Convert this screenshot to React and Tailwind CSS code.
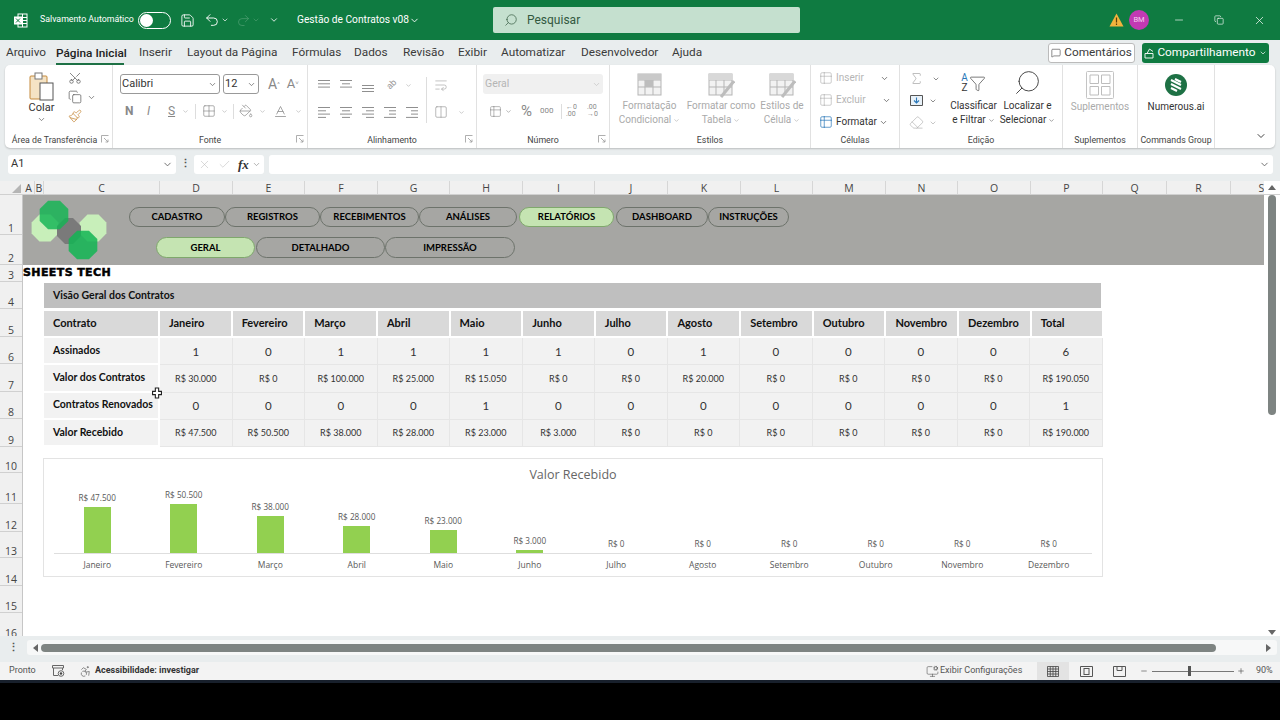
import React from 'react';
import {
  ChevronDown, Search, Save, Undo2, Redo2, Minus, Copy, X, Check, MessageSquare,
  Scissors, Paintbrush, Grid2x2, PaintBucket, Baseline, Table2, Sigma, Eraser,
  Filter, WrapText, Columns2, Accessibility, MonitorCog, Plus,
} from 'lucide-react';

const sheetFont = "font-['Lato',sans-serif]";

const Chev = ({ className = 'text-[#666]', size = 9 }) => <ChevronDown size={size} strokeWidth={2} className={`shrink-0 ${className}`} />;

const Lines = ({ widths, gray = '#8f8f8f' }) => (
  <svg width="14" height="13" viewBox="0 0 14 13" className="shrink-0">
    {widths.map((w, i) => (
      <line key={i} x1={w[0]} x2={w[1]} y1={1.5 + i * 3.3} y2={1.5 + i * 3.3} stroke={gray} strokeWidth="1" />
    ))}
  </svg>
);

const Launcher = ({ color = '#9a9a9a' }) => (
  <svg width="8" height="8" viewBox="0 0 8 8" className="shrink-0">
    <path d="M0.5 7.5V0.5H7.5M3 3L7 7M7 4.5V7H4.5" fill="none" stroke={color} strokeWidth="0.8" />
  </svg>
);

const Group = ({ width, label, launcher, children, border = true }) => (
  <div className={`flex flex-col shrink-0 h-full ${border ? 'border-r border-[#e1e1e1]' : ''}`} style={{ width }}>
    <div className="h-[66px] flex">{children}</div>
    <div className="flex-1 flex items-center justify-center relative text-[8.8px] leading-[12px] text-[#444] pt-[1px] whitespace-nowrap">
      <span className={launcher && width < 110 ? 'pr-[9px]' : ''}>{label}</span>
      {launcher && <span className="absolute right-[3px] top-[4px]"><Launcher /></span>}
    </div>
  </div>
);

const StyleIcon = ({ kind }) => (
  <svg width="28" height="26" viewBox="0 0 28 26">
    <rect x="2" y="2" width="23" height="21" fill="#f2f2f2" stroke="#b5b5b5" />
    <path d="M2 8H25M2 15H25M9 2V23M17 2V23" stroke="#b5b5b5" />
    <rect x="2" y="2" width="23" height="6" fill={kind === 0 ? '#c9c9c9' : '#d8d8d8'} />
    {kind > 0 && <path d="M14 25L27 9" stroke="#bdbdbd" strokeWidth="3" />}
    {kind === 0 && <rect x="9" y="8" width="8" height="7" fill="#bdbdbd" />}
  </svg>
);

const Ribbon = () => (
  <div className="mx-[5px] h-[83px] bg-white rounded-[5px] shadow-[0_1px_2px_rgba(0,0,0,0.2)] flex pl-[1px] text-[#333]">
    <Group width={107} label="Área de Transferência" launcher>
      <div className="w-[57px] flex flex-col items-center pt-[7px] pl-[14px]">
        <svg width="26" height="29" viewBox="0 0 26 29">
          <rect x="1" y="4" width="17" height="23" rx="1" fill="#f5e3c4" stroke="#c58a3c" />
          <rect x="6" y="1" width="7" height="6" fill="#fff" stroke="#777" />
          <rect x="11" y="11" width="13" height="17" fill="#fff" stroke="#555" />
        </svg>
        <span className="text-[11px] leading-[14px]">Colar</span>
        <Chev />
      </div>
      <div className="flex flex-col pt-[6px] pl-[5px] gap-[5px]">
        <Scissors size={14} strokeWidth={1.2} className="text-[#555] -rotate-90" />
        <div className="flex items-center gap-[5px]">
          <Copy size={14} strokeWidth={1.2} className="text-[#555]" />
          <Chev />
        </div>
        <Paintbrush size={14} strokeWidth={1.3} className="text-[#c58a3c]" />
      </div>
    </Group>
    <Group width={195} label="Fonte" launcher>
      <div className="flex flex-col pl-[7px] pt-[9px]">
        <div className="flex items-center h-[20px] gap-[3px]">
          <div className="w-[100px] h-[20px] border border-[#999] rounded-[3px] flex items-center justify-between px-[1px] pr-[2px] text-[11px]">
            <span>Calibri</span><Chev />
          </div>
          <div className="w-[36px] h-[20px] border border-[#999] rounded-[3px] flex items-center justify-between px-[1px] pr-[2px] text-[11px]">
            <span>12</span><Chev />
          </div>
          <span className="ml-[6px] text-[14px] text-[#888]">A<sup className="text-[6px]">^</sup></span>
          <span className="ml-[4px] text-[13px] text-[#888]">A<sup className="text-[6px]">˅</sup></span>
        </div>
        <div className="flex items-center h-[20px] mt-[7px] pl-[5px] text-[#888]">
          <span className="w-[22px] text-[12px] font-bold">N</span>
          <span className="w-[21px] text-[12px] italic">I</span>
          <span className="w-[14px] text-[12px] underline">S</span>
          <Chev className="text-[#aaa]" size={7} />
          <span className="w-[1px] h-[15px] bg-[#ddd] mx-[6px]" />
          <Grid2x2 size={14} strokeWidth={1} className="text-[#777]" />
          <Chev className="text-[#aaa] ml-[5px]" size={7} />
          <span className="w-[1px] h-[15px] bg-[#ddd] mx-[5px]" />
          <PaintBucket size={14} strokeWidth={1.2} className="text-[#888]" />
          <Chev className="text-[#aaa] ml-[6px]" size={7} />
          <Baseline size={15} strokeWidth={1.2} className="text-[#888] ml-[7px]" />
          <Chev className="text-[#aaa] ml-[7px]" size={7} />
        </div>
      </div>
    </Group>
    <Group width={169} label="Alinhamento" launcher>
      <div className="flex pl-[9px] pt-[12px]">
        <div className="flex flex-col w-[109px]">
          <div className="flex items-center gap-[8px] h-[16px]">
            <Lines widths={[[1, 13], [1, 13], [1, 13]]} />
            <Lines widths={[[1, 13], [3, 11], [1, 13]]} />
            <svg width="14" height="13" viewBox="0 0 14 13" className="shrink-0">
              <path d="M1 6.5H13M1 9.5H13M1 12.5H13" stroke="#8f8f8f" />
            </svg>
            <span className="text-[9px] text-[#999] -rotate-45 ml-[4px]">ab</span>
            <Chev className="text-[#aaa]" size={7} />
          </div>
          <div className="flex items-center gap-[8px] h-[16px] mt-[11px]">
            <Lines widths={[[1, 13], [1, 9], [1, 13], [1, 9]]} />
            <Lines widths={[[1, 13], [3, 11], [1, 13], [3, 11]]} />
            <Lines widths={[[1, 13], [5, 13], [1, 13], [5, 13]]} />
            <Lines widths={[[1, 13], [6, 13], [6, 13], [1, 13]]} />
            <Lines widths={[[1, 13], [6, 13], [6, 13], [1, 13]]} />
          </div>
        </div>
        <span className="w-[1px] h-[46px] bg-[#ddd]" />
        <div className="flex flex-col pl-[7px]">
          <WrapText size={14} strokeWidth={1} className="text-[#999] h-[16px]" />
          <div className="flex items-center h-[16px] mt-[11px] gap-[10px]">
            <Columns2 size={14} strokeWidth={1} className="text-[#888]" />
            <Chev className="text-[#aaa]" size={7} />
          </div>
        </div>
      </div>
    </Group>
    <Group width={133} label="Número" launcher>
      <div className="flex flex-col pl-[6px] pt-[9px]">
        <div className="w-[120px] h-[20px] bg-[#f0f0f0] rounded-[3px] flex items-center justify-between px-[2px] text-[10.5px] text-[#b5b5b5]">
          <span>Geral</span><Chev className="text-[#c5c5c5]" />
        </div>
        <div className="flex items-center h-[20px] mt-[7px] pl-[6px] text-[#888]">
          <Table2 size={13} strokeWidth={1.1} />
          <Chev className="ml-[3px]" size={7} />
          <span className="ml-[9px] text-[15px] w-[14px] leading-[15px]">%</span>
          <span className="text-[8px] ml-[5px] w-[18px]">000</span>
          <span className="w-[1px] h-[15px] bg-[#ddd] mx-[3px]" />
          <span className="text-[7px] leading-[7px] ml-[1px] w-[21px]">←0<br />.00</span>
          <span className="text-[7px] leading-[7px]">.00<br />→0</span>
        </div>
      </div>
    </Group>
    <Group width={201} label="Estilos">
      <div className="flex w-full text-[#aaa] text-[10px] leading-[14px] text-center pt-[7px] pl-[2px]">
        {[['Formatação', 'Condicional', 0, 75], ['Formatar como', 'Tabela', 1, 68], ['Estilos de', 'Célula', 2, 54]].map(([a, b, k, w]) => (
          <div key={a} className="flex flex-col items-center shrink-0" style={{ width: w }}>
            <StyleIcon kind={k} />
            <span className="whitespace-nowrap mt-[1px]">{a}</span>
            <span className="flex items-center gap-[2px]">{b}<Chev className="text-[#aaa]" size={7} /></span>
          </div>
        ))}
      </div>
    </Group>
    <Group width={89} label="Células">
      <div className="flex flex-col pl-[8px] pt-[6px] gap-[8px] text-[10px] leading-[14px]">
        <div className="flex items-center text-[#b5b5b5]">
          <Table2 size={14} strokeWidth={1} className="text-[#aaa]" />
          <span className="ml-[3px] w-[44px]">Inserir</span><Chev className="text-[#555]" />
        </div>
        <div className="flex items-center text-[#b5b5b5]">
          <Table2 size={14} strokeWidth={1} className="text-[#aaa]" />
          <span className="ml-[3px] w-[46px]">Excluir</span><Chev className="text-[#555]" />
        </div>
        <div className="flex items-center text-[#333]">
          <Table2 size={14} strokeWidth={1.2} className="text-[#2a77b8]" />
          <span className="ml-[3px]">Formatar</span><Chev className="text-[#555] ml-[2px]" />
        </div>
      </div>
    </Group>
    <Group width={163} label="Edição">
      <div className="flex flex-col pl-[9px] pt-[6px] gap-[7px] w-[46px]">
        <div className="flex items-center gap-[8px]"><Sigma size={15} strokeWidth={1} className="text-[#999]" /><Chev className="text-[#555]" size={8} /></div>
        <div className="flex items-center gap-[5px]">
          <svg width="15" height="15" viewBox="0 0 15 15" className="shrink-0">
            <path d="M1.5 2.5H13.5V12.5H1.5Z" fill="#e8f1f8" stroke="#555" />
            <path d="M7.5 4.5V10M5 7.5L7.5 10L10 7.5" fill="none" stroke="#2a77b8" strokeWidth="1.1" />
          </svg>
          <Chev className="text-[#555]" size={8} />
        </div>
        <div className="flex items-center gap-[5px]"><Eraser size={15} strokeWidth={1} className="text-[#aaa]" /><Chev className="text-[#aaa]" size={8} /></div>
      </div>
      <div className="w-[55px] flex flex-col items-center pt-[5px] text-[10px] leading-[14px] text-[#333]">
        <div className="flex items-center h-[26px] gap-[1px]">
          <span className="text-[10px] leading-[10px] text-center"><span className="text-[#2a77b8]">A</span><br />Z</span>
          <Filter size={17} strokeWidth={1} className="text-[#444]" />
        </div>
        <span className="mt-[3px] whitespace-nowrap">Classificar</span>
        <span className="flex items-center gap-[2px] whitespace-nowrap">e Filtrar<Chev size={7} /></span>
      </div>
      <div className="w-[53px] flex flex-col items-center pt-[3px] text-[10px] leading-[14px] text-[#333]">
        <Search size={29} strokeWidth={0.8} className="text-[#444] -scale-x-100" />
        <span className="mt-[2px] whitespace-nowrap">Localizar e</span>
        <span className="flex items-center gap-[2px] whitespace-nowrap">Selecionar<Chev size={7} /></span>
      </div>
    </Group>
    <Group width={75} label="Suplementos">
      <div className="w-full flex flex-col items-center pt-[6px] text-[10px] text-[#aaa]">
        <svg width="28" height="28" viewBox="0 0 28 28">
          <rect x="0.5" y="0.5" width="27" height="27" rx="1" fill="none" stroke="#c4c4c4" />
          <path d="M4 4H12.5V12.5H4ZM15.5 4H24V12.5H15.5ZM4 15.5H12.5V24H4ZM15.5 15.5H24V24H15.5Z" fill="none" stroke="#bdbdbd" />
        </svg>
        <span className="mt-[1px] leading-[14px]">Suplementos</span>
      </div>
    </Group>
    <Group width={77} label="Commands Group">
      <div className="w-full flex flex-col items-center pt-[8px] text-[10px] text-[#333]">
        <svg width="24" height="24" viewBox="0 0 24 24">
          <circle cx="12" cy="12" r="11" fill="#1e7145" />
          <path d="M7 7L17 12M7 11L17 16M7 15L13 18M11 6L17 9" stroke="#fff" strokeWidth="2" />
        </svg>
        <span className="mt-[3px] leading-[14px] whitespace-nowrap">Numerous.ai</span>
      </div>
    </Group>
    <div className="flex-1 flex items-end justify-end pr-[8px] pb-[6px]"><Chev className="text-[#444]" size={12} /></div>
  </div>
);

const cols = [['A', 12], ['B', 9], ['C', 116], ['D', 73], ['E', 72], ['F', 73], ['G', 72], ['H', 73], ['I', 72], ['J', 73], ['K', 73], ['L', 72], ['M', 73], ['N', 72], ['O', 73], ['P', 72], ['Q', 64], ['R', 64], ['S', 62]];
const rows = [[1, 40], [2, 30], [3, 17], [4, 27], [5, 28], [6, 27], [7, 28], [8, 27], [9, 28], [10, 26], [11, 31], [12, 28], [13, 26], [14, 28], [15, 27], [16, 27]];

const months = ['Janeiro', 'Fevereiro', 'Março', 'Abril', 'Maio', 'Junho', 'Julho', 'Agosto', 'Setembro', 'Outubro', 'Novembro', 'Dezembro'];
const table = [
  { name: 'Assinados', big: true, vals: [1, 0, 1, 1, 1, 1, 0, 1, 0, 0, 0, 0, 6] },
  { name: 'Valor dos Contratos', vals: ['R$ 30.000', 'R$ 0', 'R$ 100.000', 'R$ 25.000', 'R$ 15.050', 'R$ 0', 'R$ 0', 'R$ 20.000', 'R$ 0', 'R$ 0', 'R$ 0', 'R$ 0', 'R$ 190.050'] },
  { name: 'Contratos Renovados', big: true, vals: [0, 0, 0, 0, 1, 0, 0, 0, 0, 0, 0, 0, 1] },
  { name: 'Valor Recebido', vals: ['R$ 47.500', 'R$ 50.500', 'R$ 38.000', 'R$ 28.000', 'R$ 23.000', 'R$ 3.000', 'R$ 0', 'R$ 0', 'R$ 0', 'R$ 0', 'R$ 0', 'R$ 0', 'R$ 190.000'] },
];
const chart = [[47500, 46], [50500, 49], [38000, 37], [28000, 27], [23000, 23], [3000, 3], [0, 0], [0, 0], [0, 0], [0, 0], [0, 0], [0, 0]];

const octagon = (cx, cy, r) =>
  Array.from({ length: 8 }, (_, i) => {
    const a = Math.PI / 8 + (i * Math.PI) / 4;
    return `${cx + r * Math.cos(a)},${cy + r * Math.sin(a)}`;
  }).join(' ');

const Logo = () => (
  <svg width="86" height="66" viewBox="0 0 86 66" className="shrink-0 mt-[3px] ml-[8px]">
    <polygon points={octagon(14, 30, 14.5)} fill="#c8efba" />
    <polygon points={octagon(62, 30, 14.5)} fill="#c8efba" />
    <polygon points="34,20 42,20 50,28 50,38 42,46 34,46 26,38 26,28" fill="#7a7a7a" />
    <polygon points={octagon(23, 17, 15.5)} fill="#12b553" fillOpacity="0.82" />
    <polygon points={octagon(52, 47, 15.5)} fill="#12b553" fillOpacity="0.85" />
  </svg>
);

const Pill = ({ label, width, active }) => (
  <div
    className={`flex items-center justify-center rounded-full border shrink-0 pt-[1px] text-[9.5px] font-bold text-black ${sheetFont} ${active ? 'bg-[#c5e4b2] border-[#7fa86c]' : 'border-[#6d736b]'}`}
    style={{ width }}
  >
    {label}
  </div>
);

const Nav = () => (
  <div className="h-[70px] bg-[#a6a6a3] flex">
    <Logo />
    <div className="flex flex-col pl-[12px] pt-[12px]">
      <div className="flex h-[20px]">
        <Pill label="CADASTRO" width={96} />
        <Pill label="REGISTROS" width={95} />
        <Pill label="RECEBIMENTOS" width={99} />
        <Pill label="ANÁLISES" width={98} />
        <span className="w-[2px]" />
        <Pill label="RELATÓRIOS" width={95} active />
        <span className="w-[2px]" />
        <Pill label="DASHBOARD" width={92} />
        <Pill label="INSTRUÇÕES" width={81} />
      </div>
      <div className="flex h-[21px] mt-[10px] ml-[27px]">
        <Pill label="GERAL" width={99} active />
        <span className="w-[1px]" />
        <Pill label="DETALHADO" width={129} />
        <Pill label="IMPRESSÃO" width={130} />
      </div>
    </div>
  </div>
);

const ContractTable = () => (
  <div className={`ml-[21px] w-[1059px] ${sheetFont}`}>
    <div className="h-[25px] w-[1057px] bg-[#bfbfbf] flex items-center pl-[9px] pt-[1px] text-[10.5px] font-bold text-[#111]">Visão Geral dos Contratos</div>
    <div className="grid grid-cols-[116px_repeat(13,72.65px)] mt-[3px]">
      <div className="h-[25px] mr-[2px] bg-[#d9d9d9] flex items-center pl-[9px] text-[11px] font-bold text-[#111]">Contrato</div>
      {[...months, 'Total'].map((m) => (
        <div key={m} className="h-[25px] mr-[2px] bg-[#d9d9d9] flex items-center pl-[9px] text-[11px] font-bold text-[#111]">{m}</div>
      ))}
    </div>
    <div className="mt-[2px] grid grid-cols-[116px_repeat(13,72.5px)] auto-rows-[27.3px]">
      {table.map((row) => (
        <React.Fragment key={row.name}>
          <div className="mr-[2px] border-b-2 border-white bg-[#f2f2f2] flex items-center pl-[9px] text-[10.5px] font-bold text-[#111] whitespace-nowrap">{row.name}</div>
          {row.vals.map((v, i) => (
            <div key={i} className={`bg-[#f2f2f2] border-r border-b border-[#e6e6e6] flex items-center justify-center text-[#333] ${row.big ? 'text-[11.5px]' : 'text-[9px]'}`}>{v}</div>
          ))}
        </React.Fragment>
      ))}
    </div>
  </div>
);

const Chart = () => (
  <div className="ml-[20px] mt-[11px] w-[1060px] h-[119px] border border-[#e3e3e3] bg-white flex flex-col px-[10px] text-[#595959] font-['Open_Sans',sans-serif]">
    <div className="h-[30px] pt-[6px] text-center text-[12.5px] leading-[20px] text-[#666]">Valor Recebido</div>
    <div className="h-[65px] flex border-b border-[#dedede]">
      {chart.map(([v, h], i) => (
        <div key={months[i]} className="flex-1 flex flex-col items-center justify-end">
          <span className="text-[8.2px] leading-[12px] mb-[3px]">{`R$ ${v ? v.toLocaleString('pt-BR') : 0}`}</span>
          <div className="w-[27px] bg-[#92d050]" style={{ height: h }} />
        </div>
      ))}
    </div>
    <div className="flex pt-[5px]">
      {months.map((m) => (
        <span key={m} className="flex-1 text-center text-[8.5px] leading-[12px]">{m}</span>
      ))}
    </div>
  </div>
);

const Sheet = () => (
  <div className="h-[455px] flex flex-col font-['Open_Sans',sans-serif]">
    <div className="h-[14px] flex bg-[#f0f0f0] border-b border-[#d0d0d0] text-[10.5px] text-[#444] shrink-0">
      <div className="w-[23px] flex items-end justify-end pr-[2px] pb-[1px] shrink-0">
        <span className="w-0 h-0 border-l-[9px] border-l-transparent border-b-[9px] border-b-[#b5b5b5]" />
      </div>
      <div className="w-[1241px] flex overflow-hidden shrink-0">
        {cols.map(([c, w]) => (
          <span key={c} className="shrink-0 text-center leading-[14px] border-r border-[#d6d6d6]" style={{ width: w }}>{c}</span>
        ))}
      </div>
      <div className="flex-1 flex items-center justify-center bg-white">
        <span className="w-0 h-0 border-x-[4px] border-x-transparent border-b-[5px] border-b-[#666]" />
      </div>
    </div>
    <div className="flex flex-1 min-h-0">
      <div className="w-[23px] shrink-0 overflow-hidden bg-[#f0f0f0] border-r border-[#c6c6c6] text-[10.5px] text-[#444]">
        {rows.map(([n, h]) => (
          <div key={n} className="flex items-end justify-center border-b border-[#d0d0d0] leading-[12px]" style={{ height: h }}>{n}</div>
        ))}
      </div>
      <div className="w-[1241px] shrink-0 overflow-hidden bg-white">
        <Nav />
        <div className="h-[18px] text-[11px] leading-[15px] font-black tracking-[0.4px] text-black [-webkit-text-stroke:0.5px_black] font-['DejaVu_Sans',sans-serif]">SHEETS TECH</div>
        <ContractTable />
        <Chart />
      </div>
      <div className="flex-1 bg-white flex flex-col items-center">
        <div className="w-[8px] h-[220px] rounded-full bg-[#7e8482]" />
        <span className="mt-auto mb-[1px] w-0 h-0 border-x-[4px] border-x-transparent border-t-[5px] border-t-[#666]" />
      </div>
    </div>
  </div>
);

export default function App() {
  return (
    <div className="relative w-[1280px] h-[720px] overflow-hidden bg-[#e9edee] font-['Roboto',sans-serif]">
      <div className="h-[40px] bg-[#0f7b41] flex items-center text-white pl-[13px] pr-[14px]">
        <svg width="15" height="15" viewBox="0 0 15 15" className="shrink-0">
          <rect x="5" y="1" width="9" height="13" fill="none" stroke="#fff" />
          <path d="M5 4.5H14M5 7.5H14M5 10.5H14M9.5 1V14" stroke="#fff" />
          <rect x="1" y="3.5" width="8" height="8" fill="#fff" />
          <path d="M3 5.5L7 9.5M7 5.5L3 9.5" stroke="#0f7b41" />
        </svg>
        <span className="ml-[12px] w-[98px] text-[8.8px] whitespace-nowrap">Salvamento Automático</span>
        <div className="w-[33px] h-[17px] rounded-full border border-white flex items-center pl-[1px]">
          <span className="w-[13px] h-[13px] rounded-full bg-white" />
        </div>
        <Save size={15} strokeWidth={1.4} className="ml-[9px]" />
        <Undo2 size={16} strokeWidth={1.4} className="ml-[9px]" />
        <Chev className="text-white ml-[1px]" size={8} />
        <Redo2 size={15} strokeWidth={1.2} className="ml-[7px] text-[#4c9e70]" />
        <Chev className="text-[#4c9e70] ml-[1px]" size={8} />
        <Chev className="text-white ml-[9px]" size={10} />
        <span className="ml-[18px] w-[112px] text-[10.2px] whitespace-nowrap">Gestão de Contratos v08</span>
        <Chev className="text-white" size={11} />
        <div className="ml-[73px] w-[307px] h-[26px] rounded-[2px] bg-[#c5e0cf] flex items-center pl-[11px] text-[#33593f]">
          <Search size={14} strokeWidth={1.2} className="-scale-x-100" />
          <span className="ml-[9px] text-[12px]">Pesquisar</span>
        </div>
        <svg width="15" height="14" viewBox="0 0 15 14" className="ml-auto shrink-0">
          <path d="M7.5 0.5L14.5 13.5H0.5Z" fill="#f2b33d" />
          <path d="M7.5 4.5V9.5M7.5 10.5V12" stroke="#5a3d06" strokeWidth="1.2" />
        </svg>
        <div className="ml-[5px] w-[20px] h-[20px] rounded-full bg-[#c239b3] flex items-center justify-center text-[7.5px] text-[#f4cfee]">BM</div>
        <Minus size={12} strokeWidth={1.3} className="ml-[24px]" />
        <Copy size={10} strokeWidth={1.5} className="ml-[29px]" />
        <X size={13} strokeWidth={1.3} className="ml-[29px]" />
      </div>

      <div className="h-[25px] flex items-center text-[11.8px] text-[#3b3b3b] pl-[6px] pt-[1px]">
        <span className="w-[50px]">Arquivo</span>
        <span className="w-[68px] whitespace-nowrap font-medium text-[#222] border-b-2 border-[#1e7145] leading-[20px] mt-[1px]">Página Inicial</span>
        <span className="ml-[15px] w-[48px]">Inserir</span>
        <span className="w-[105px]">Layout da Página</span>
        <span className="w-[62px]">Fórmulas</span>
        <span className="w-[49px]">Dados</span>
        <span className="w-[55px]">Revisão</span>
        <span className="w-[43px]">Exibir</span>
        <span className="w-[80px]">Automatizar</span>
        <span className="w-[91px]">Desenvolvedor</span>
        <span>Ajuda</span>
        <div className="ml-auto flex items-center gap-[7px] pr-[11px]">
          <div className="h-[20px] w-[87px] bg-white border border-[#bbb] rounded-[3px] flex items-center justify-center gap-[3px]">
            <MessageSquare size={10} strokeWidth={1.4} />
            <span>Comentários</span>
          </div>
          <div className="h-[20px] w-[127px] bg-[#0f7b41] text-white rounded-[3px] flex items-center justify-center gap-[3px] whitespace-nowrap">
            <svg width="10" height="11" viewBox="0 0 10 11" className="shrink-0">
              <path d="M1 5.5H9V10H1ZM3 5.5L5.5 1L9 3.5" fill="none" stroke="#fff" strokeWidth="0.9" />
            </svg>
            <span>Compartilhamento</span>
            <Chev className="text-white" size={8} />
          </div>
        </div>
      </div>

      <Ribbon />

      <div className="h-[19px] mt-[7px] mb-[7px] flex pl-[8px] pr-[7px]">
        <div className="w-[168px] bg-white rounded-[3px] flex items-center justify-between px-[3px] text-[11px] text-[#333]">
          <span>A1</span><Chev size={11} />
        </div>
        <span className="w-[18px] text-center text-[#555] text-[11px] leading-[17px] font-bold">⋮</span>
        <div className="w-[70px] bg-white rounded-[3px] flex items-center pl-[4px] gap-[7px] text-[#bbb]">
          <X size={13} strokeWidth={1} />
          <Check size={13} strokeWidth={1} />
          <span className="text-[13px] italic font-bold text-[#333] font-['Liberation_Serif',serif]">fx</span>
          <Chev size={9} className="-ml-[4px] text-[#999]" />
        </div>
        <div className="ml-[5px] flex-1 bg-white rounded-[3px] flex items-center justify-end pr-[3px]"><Chev size={11} /></div>
      </div>

      <Sheet />

      <div className="h-[26px] flex items-start pt-[4px] pl-[4px] pr-[3px]">
        <span className="w-[18px] text-center text-[11px] leading-[15px] font-bold text-[#555]">⋮</span>
        <div className="ml-[5px] flex-1 h-[15px] bg-[#f7f8f8] rounded-[3px] flex items-center pl-[6px] pr-[6px]">
          <span className="w-0 h-0 border-y-[4px] border-y-transparent border-r-[5px] border-r-[#666]" />
          <div className="ml-[3px] w-[1175px] h-[8px] rounded-full bg-[#7e8482]" />
          <span className="ml-auto w-0 h-0 border-y-[4px] border-y-transparent border-l-[5px] border-l-[#666]" />
        </div>
      </div>

      <div className="h-[18px] bg-[#f3f3f3] flex items-center pl-[9px] text-[9px] text-[#555]">
        <span className="w-[43px]">Pronto</span>
        <svg width="13" height="12" viewBox="0 0 13 12" className="shrink-0">
          <path d="M0.5 0.5H11.5V3H0.5ZM1.5 3V10.5H6M10.5 3V5" fill="none" stroke="#666" />
          <circle cx="9" cy="8.5" r="2.8" fill="none" stroke="#666" />
          <circle cx="9" cy="8.5" r="1.2" fill="#444" />
        </svg>
        <Accessibility size={13} strokeWidth={1.2} className="ml-[14px]" />
        <span className="ml-[3px] font-bold text-[#333] whitespace-nowrap">Acessibilidade: investigar</span>
        <MonitorCog size={13} strokeWidth={1.1} className="ml-auto" />
        <span className="ml-[1px] w-[97px] whitespace-nowrap">Exibir Configurações</span>
        <div className="w-[32px] h-[18px] bg-[#e3e3e3] flex items-center justify-center">
          <svg width="12" height="11" viewBox="0 0 12 11"><path d="M0.5 0.5H11.5V10.5H0.5ZM0.5 3H11.5M0.5 5.5H11.5M0.5 8H11.5M3.25 0.5V10.5M6 0.5V10.5M8.75 0.5V10.5" fill="none" stroke="#444" strokeWidth="0.8" /></svg>
        </div>
        <svg width="13" height="11" viewBox="0 0 13 11" className="ml-[11px] shrink-0"><path d="M0.5 0.5H12.5V10.5H0.5Z" fill="none" stroke="#555" /><rect x="4" y="2.5" width="5" height="6" fill="none" stroke="#555" /></svg>
        <svg width="13" height="11" viewBox="0 0 13 11" className="ml-[20px] shrink-0"><path d="M0.5 0.5H12.5V10.5H0.5ZM4 0.5V4.5H9V0.5" fill="none" stroke="#555" /></svg>
        <Minus size={8} className="ml-[14px]" />
        <div className="ml-[4px] w-[82px] h-[1px] bg-[#777] flex items-center pl-[36px]">
          <span className="w-[3px] h-[10px] bg-[#555]" />
        </div>
        <Plus size={8} className="ml-[3px]" />
        <span className="ml-[11px] w-[24px]">90%</span>
      </div>

      <div className="h-[40px] bg-black border-t-[3px] border-[#18202c]" />

      <div className="absolute left-[152px] top-[387px]">
        <svg width="10" height="12" viewBox="0 0 9 10">
          <path d="M3 0.5H6V3.5H8.5V6.5H6V9.5H3V6.5H0.5V3.5H3Z" fill="#fff" stroke="#222" strokeWidth="1" />
        </svg>
      </div>
    </div>
  );
}
